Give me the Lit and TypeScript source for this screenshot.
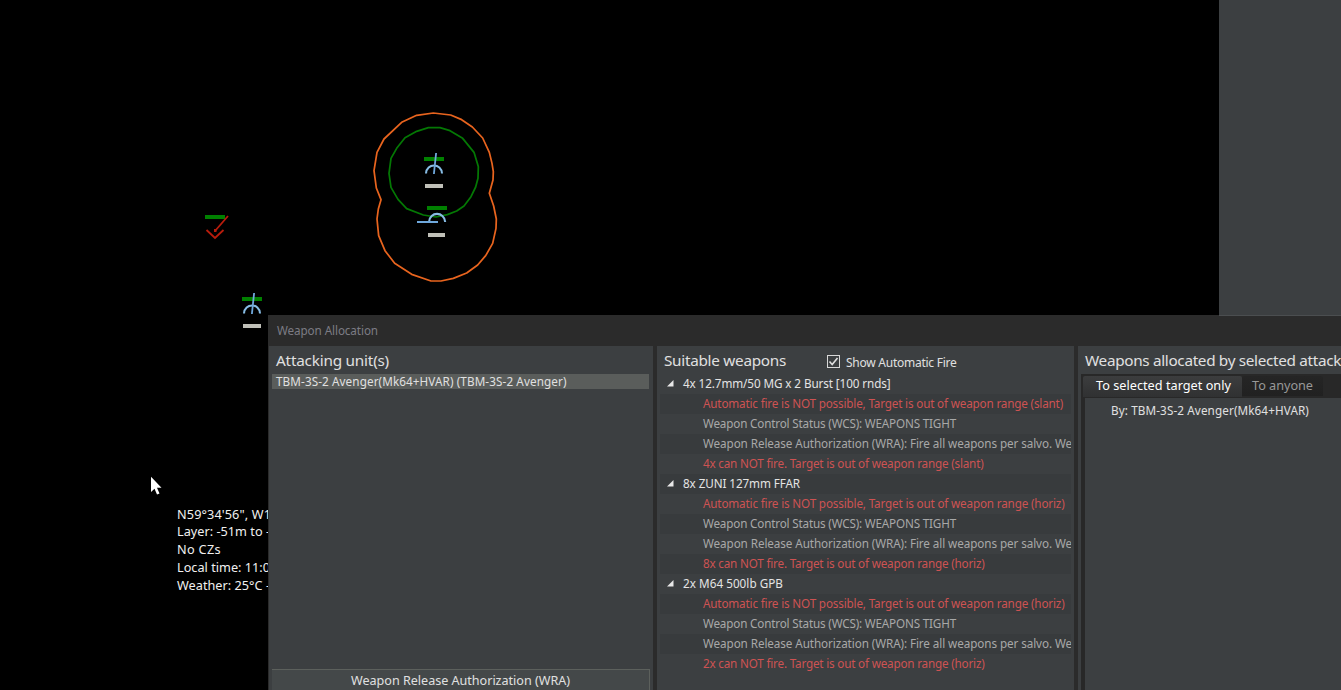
import { LitElement, html, svg, css } from "lit";
import { customElement, property } from "lit/decorators.js";

/** A single line of text whose tracking is adjusted to fill a given width. */
@customElement("fit-text")
class FitText extends LitElement {
  @property({ type: Number }) w = 0;
  @property() text = "";

  static styles = css`
    :host { display: inline-block; white-space: pre; }
    span { display: inline-block; }
  `;

  updated() {
    const el = this.renderRoot.querySelector("span") as HTMLElement;
    if (!this.w || !this.text) return;
    el.style.letterSpacing = "0px";
    const natural = el.getBoundingClientRect().width;
    el.style.letterSpacing = `${(this.w - natural) / this.text.length}px`;
  }

  render() {
    return html`<span>${this.text}</span>`;
  }
}

@customElement("tactical-map")
class TacticalMap extends LitElement {
  static styles = css`
    :host { display: block; position: relative; background: #000; overflow: hidden; }
    svg { display: block; }
    .info {
      position: absolute; left: 177px; top: 505.7px;
      display: flex; flex-direction: column;
      font-size: 12.7px; line-height: 17.75px; color: #f0f0f0;
    }
    .cursor { position: absolute; left: 150px; top: 476px; }
  `;

  aircraft(x: number, y: number) {
    return svg`<g transform="translate(${x} ${y})">
      <rect x="0" y="4" width="20" height="4" fill="#008000"/>
      <rect x="1" y="31" width="18" height="4" fill="#c0c0b8"/>
      <path d="M2 20.500C2.500 9.800 17.500 9.800 18 20.500" fill="none" stroke="#87bce4" stroke-width="2.1"/>
      <path d="M12.100 0L9.900 21" stroke="#6fa8dc" stroke-width="1.8"/>
    </g>`;
  }

  render() {
    return html`
      <svg width="1219" height="690" viewBox="0 0 1219 690">
        <g transform="translate(360 100) scale(.33333)" fill="none" stroke-linejoin="round">
          <path stroke="#e8641e" stroke-width="5.2" d="M170 46L220 39L272 45L305 59L337 81L368 114L388 157L396 190L400 215L399 240L388 280L401 318L409 357L408 385L398 430L377 467L353 495L320 519L280 535L243 543L213 543L155 523L104 490L75 452L56 407L51 357L55 327L63 299L49 264L42 212L51 157L72 117L125 67Z"/>
          <path stroke="#047804" stroke-width="5.2" d="M205 83L240 83L270 92L308 115L342 157L352 190L355 200L354 235L347 261L333 290L312 318L290 333L262 344L228 351L190 345L140 326L114 298L93 262L87 220L93 175L110 145L135 113L170 94Z"/>
        </g>
        ${this.aircraft(424, 153)}
        ${this.aircraft(242, 293)}
        <rect x="427" y="206" width="20" height="4" fill="#008000"/>
        <rect x="428" y="233" width="17" height="4" fill="#c0c0b8"/>
        <path d="M429 222C429.500 211.200 444.500 211.200 445.200 222" fill="none" stroke="#87bce4" stroke-width="2.1"/>
        <path d="M417 222H438" stroke="#6fa8dc" stroke-width="2"/>
        <rect x="205" y="215" width="20" height="4" fill="#008000"/>
        <path d="M206.500 230L215 238L223.500 230M215 231L228 216" fill="none" stroke="#b81c0c" stroke-width="1.8"/>
        <rect x="214" y="229" width="2.500" height="3" fill="#b81c0c"/>
      </svg>
      <div class="info">
        <fit-text w="94" text=${"N59°34'56\", W1"}></fit-text>
        <fit-text w="93" text="Layer: -51m to -"></fit-text>
        <fit-text w="44" text="No CZs"></fit-text>
        <fit-text w="93" text="Local time: 11:0"></fit-text>
        <fit-text w="93" text="Weather: 25°C -"></fit-text>
      </div>
      <svg class="cursor" width="14" height="20" viewBox="0 0 14 20">
        <path d="M1 .8V16L4.500 12.700L7 18.500L9.500 17.500L7 11.700H11.500Z" fill="#fff"/>
      </svg>
    `;
  }
}

interface Weapon { name: string; w: number; qty: string; reason: string; auto: number; fire: number; }

const WEAPONS: Weapon[] = [
  { name: "4x 12.7mm/50 MG x 2 Burst [100 rnds]", w: 207.5, qty: "4x", reason: "slant", auto: 360, fire: 280.5 },
  { name: "8x ZUNI 127mm FFAR", w: 117, qty: "8x", reason: "horiz", auto: 361.5, fire: 281.5 },
  { name: "2x M64 500lb GPB", w: 100, qty: "2x", reason: "horiz", auto: 361.5, fire: 281.5 },
];

@customElement("weapon-dialog")
class WeaponDialog extends LitElement {
  static styles = css`
    :host {
      display: flex; flex-direction: column; box-sizing: border-box;
      background: #2b2b2b; color: #e0e0e0; font-size: 11.7px; overflow: hidden;
    }
    .title { height: 31px; line-height: 31px; padding-left: 9px; color: #7c7c84; flex: none; }
    .columns { flex: 1; display: flex; gap: 4px; padding-left: 1px; min-height: 0; }
    .panel { background: #3c3f41; display: flex; flex-direction: column; flex: none; box-sizing: border-box; overflow: hidden; }
    .units { width: 384px; padding: 0 3px; }
    .weapons { width: 417px; padding: 0 3px; }
    .allocated { width: 263px; }
    .head { height: 28px; line-height: 29px; font-size: 15.3px; padding-left: 4px; flex: none; display: flex; white-space: pre; }
    .unit { height: 15px; line-height: 15px; margin: 0 1px 0 0; background: #5a5d5b; padding-left: 4px; }
    .spacer { flex: 1; }
    .wra {
      height: 21px; box-sizing: border-box; border: 1px solid #5c605c; border-width: 1px 1px 0 0;
      background: #444849; text-align: center; line-height: 22px; font-size: 12.6px;
    }
    .check { display: flex; align-items: flex-start; font-size: 12px; padding: 5px 0 0 41px; line-height: 24px; height: 23px; gap: 6px; }
    .check svg { margin-top: 4px; }
    .row { height: 20px; line-height: 18px; display: flex; align-items: flex-start; padding-left: 43px; overflow: hidden; flex: none; color: #a8a8a8; }
    .row svg { margin-top: 6px; }
    .row.name { padding-left: 7px; gap: 9px; color: #e4e4e4; }
    .row.dark { background: #383b3d; }
    .row.warn { color: #cd5353; }
    .tabs-frame { flex: 1; margin-left: 3px; background: #282828; display: flex; flex-direction: column; padding-left: 4px; }
    .tabs { height: 24px; display: flex; align-items: flex-start; padding-top: 2px; box-sizing: border-box; margin-left: -2px; font-size: 12.7px; }
    .tab { height: 20px; line-height: 19px; background: linear-gradient(#252525, #212121); color: #989898; padding: 0 10px; border-radius: 2px 2px 0 0; }
    .tab.active { height: 21px; background: linear-gradient(#3c3d3e, #303132); color: #fff; padding: 0 11px 0 13px; }
    .content { flex: 1; background: #3c3f41; padding: 3px 0 0 26px; line-height: 18px; }
  `;

  weaponRows(wp: Weapon, i: number) {
    const rows = [
      { c: "name", t: wp.name, w: wp.w },
      { c: "warn", t: `Automatic fire is NOT possible, Target is out of weapon range (${wp.reason})`, w: wp.auto },
      { c: "", t: "Weapon Control Status (WCS): WEAPONS TIGHT", w: 253 },
      { c: "", t: "Weapon Release Authorization (WRA): Fire all weapons per salvo. We", w: 369 },
      { c: "warn", t: `${wp.qty} can NOT fire. Target is out of weapon range (${wp.reason})`, w: wp.fire },
    ];
    return rows.map((r, j) => html`
      <div class="row ${r.c} ${(i * 5 + j) % 2 ? "dark" : ""}">
        ${r.c === "name" ? html`<svg width="7" height="7" viewBox="0 0 7 7"><path d="M6.500 0V6.500H0Z" fill="#e8e8e8"/></svg>` : ""}
        <fit-text .w=${r.w} .text=${r.t}></fit-text>
      </div>`);
  }

  render() {
    return html`
      <div class="title"><fit-text w="101" text="Weapon Allocation"></fit-text></div>
      <div class="columns">
        <div class="panel units">
          <div class="head"><fit-text w="113" text="Attacking unit(s)"></fit-text></div>
          <div class="unit"><fit-text w="290.5" text="TBM-3S-2 Avenger(Mk64+HVAR) (TBM-3S-2 Avenger)"></fit-text></div>
          <div class="spacer"></div>
          <div class="wra"><fit-text w="219" text="Weapon Release Authorization (WRA)"></fit-text></div>
        </div>
        <div class="panel weapons">
          <div class="head">
            <fit-text w="122" text="Suitable weapons"></fit-text>
            <div class="check">
              <svg width="13" height="13" viewBox="0 0 13 13" fill="none">
                <rect x=".5" y=".5" width="12" height="12" stroke="#d8d8d8"/>
                <path d="M2.500 6.500L5.200 9.500L10.500 3" stroke="#e0e0e0" stroke-width="1.6"/>
              </svg>
              <fit-text w="110.5" text="Show Automatic Fire"></fit-text>
            </div>
          </div>
          ${WEAPONS.map((w, i) => this.weaponRows(w, i))}
        </div>
        <div class="panel allocated">
          <div class="head"><fit-text style="margin-left:3px" w="256" text="Weapons allocated by selected attack"></fit-text></div>
          <div class="tabs-frame">
            <div class="tabs">
              <div class="tab active"><fit-text w="135" text="To selected target only"></fit-text></div>
              <div class="tab"><fit-text w="61" text="To anyone"></fit-text></div>
            </div>
            <div class="content"><fit-text w="198" text="By: TBM-3S-2 Avenger(Mk64+HVAR)"></fit-text></div>
          </div>
        </div>
      </div>
    `;
  }
}

@customElement("app-root")
class AppRoot extends LitElement {
  static styles = css`
    :host {
      display: flex; position: relative; width: 1341px; height: 690px; overflow: hidden;
      background: #000; font-family: "Noto Sans", "Open Sans", sans-serif;
    }
    tactical-map { width: 1219px; }
    .sidebar {
      flex: 1; box-sizing: border-box; height: 316px; position: relative; z-index: 1;
      background: #3c3f41; border-bottom: 1px solid #4b4e50;
    }
    weapon-dialog { position: absolute; left: 268px; top: 315px; width: 1073px; height: 375px; }
  `;

  render() {
    return html`
      <tactical-map></tactical-map>
      <div class="sidebar"></div>
      <weapon-dialog></weapon-dialog>
    `;
  }
}
